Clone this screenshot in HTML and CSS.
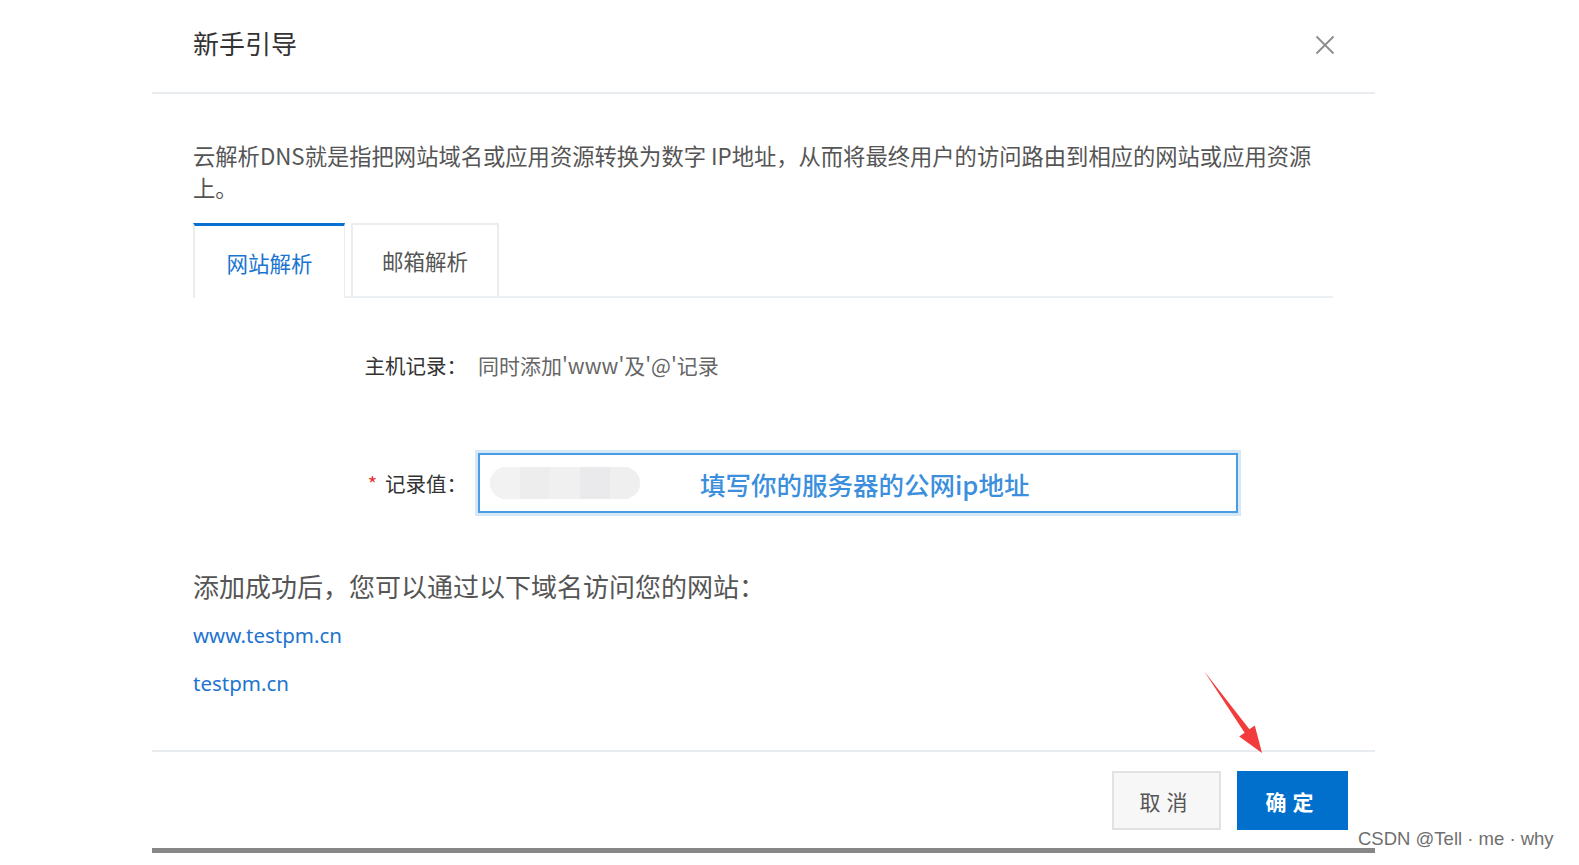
FILE: index.html
```html
<!DOCTYPE html>
<html lang="zh-CN">
<head>
<meta charset="utf-8">
<title>新手引导</title>
<link rel="stylesheet" href="styles.css">
</head>
<body>
<div class="page">
  <div class="dialog">
    <div class="dialog-header">
      <div class="dialog-title">新手引导</div>
      <svg class="close" viewBox="0 0 20 20" width="20" height="20"><path d="M1.5 1.5 L18.5 18.5 M18.5 1.5 L1.5 18.5" stroke="#8c8c8c" stroke-width="1.8" fill="none"/></svg>
    </div>
    <div class="dialog-body">
      <p class="desc">云解析DNS就是指把网站域名或应用资源转换为数字 IP地址，从而将最终用户的访问路由到相应的网站或应用资源上。</p>
      <div class="tabs">
        <div class="tab active">网站解析</div>
        <div class="tab">邮箱解析</div>
      </div>
      <div class="form">
        <div class="form-row">
          <div class="label">主机记录：</div>
          <div class="value">同时添加'www'及'@'记录</div>
        </div>
        <div class="form-row row-input">
          <div class="label"><span class="req">*</span>记录值：</div>
          <div class="input">
            <div class="blur"><span></span><span></span><span></span><span></span><span></span></div>
            <div class="hint">填写你的服务器的公网ip地址</div>
          </div>
        </div>
      </div>
      <div class="success">添加成功后，您可以通过以下域名访问您的网站：</div>
      <a class="link first">www.testpm.cn</a>
      <a class="link">testpm.cn</a>
    </div>
    <div class="dialog-footer">
      <button class="btn btn-cancel">取消</button>
      <button class="btn btn-ok">确定</button>
    </div>
  </div>
  <svg class="arrow" viewBox="0 0 1579 865" width="1579" height="865">
    <polygon points="1204,671 1249.4,729.3 1254.8,725.5 1262,753 1239.2,736.5 1244.6,732.7" fill="#f23b3b"/>
  </svg>
  <div class="watermark">CSDN @Tell · me · why</div>
</div>
</body>
</html>
```

FILE: styles.css
```css
html, body {
  margin: 0;
  padding: 0;
  background: #ffffff;
}
.page {
  position: relative;
  width: 1579px;
  height: 865px;
  overflow: hidden;
  font-family: "Noto Sans CJK SC", "Noto Sans", sans-serif;
}
.dialog {
  margin-left: 152px;
  width: 1223px;
  background: #fff;
  border-bottom: 5px solid #878787;
}
.dialog-header {
  height: 94px;
  box-sizing: border-box;
  border-bottom: 2px solid #e8ecf1;
  display: flex;
  align-items: center;
  justify-content: space-between;
  padding: 0 40px 0 41px;
}
.dialog-title {
  font-size: 26px;
  color: #333;
  margin-top: -8px;
}
.close {
  margin-top: -2px;
}
.dialog-body {
  padding: 0 42px 52px 41px;
}
.desc {
  margin: 45px 0 0;
  width: 1140px;
  font-size: 22.3px;
  line-height: 32px;
  color: #555;
}
.tabs {
  margin-top: 20px;
  display: flex;
  gap: 6px;
  border-bottom: 2px solid #eceff3;
  height: 73px;
}
.tab {
  width: 148px;
  height: 73px;
  box-sizing: border-box;
  border: 2px solid #e9edf2;
  border-bottom: none;
  display: flex;
  align-items: center;
  justify-content: center;
  font-size: 21.5px;
  color: #555;
  padding-top: 0;
}
.tab.active {
  width: 152px;
  height: 75px;
  border-top: 3px solid #0a6fd0;
  background: #fff;
  color: #1a74d2;
  border-right-width: 1px;
  padding-top: 0;
}
.form {
  display: flex;
  flex-direction: column;
}
.form-row {
  display: grid;
  grid-template-columns: 274px 1fr;
  column-gap: 11px;
  align-items: center;
  margin-top: 47px;
  height: 40px;
}
.label {
  text-align: right;
  font-size: 20.5px;
  color: #333;
}
.value {
  font-size: 21px;
  color: #666;
}
.req {
  color: #e5342f;
  margin-right: 8px;
  font-size: 20px;
}
.row-input {
  margin-top: 68px;
  height: 60px;
}
.input {
  width: 760px;
  height: 60px;
  box-sizing: border-box;
  border: 2px solid #4a9de3;
  box-shadow: 0 0 0 3px #d6e8f8;
  display: flex;
  align-items: center;
  padding-left: 10px;
}
.blur {
  width: 150px;
  height: 32px;
  border-radius: 16px;
  overflow: hidden;
  display: flex;
  background: #f1f1f1;
}
.blur span {
  flex: 1;
  background: #f2f2f2;
}
.blur span:nth-child(2) { background: #ededed; }
.blur span:nth-child(3) { background: #f0f0f0; }
.blur span:nth-child(4) { background: #eaeaec; }
.blur span:nth-child(5) { background: #efefef; }
.hint {
  margin-left: 60px;
  font-size: 25.5px;
  font-weight: 500;
  color: #3b8fdd;
}
.success {
  margin-top: 55px;
  font-size: 26px;
  line-height: 36px;
  color: #555;
}
.link {
  display: block;
  font-family: "Noto Sans", "Open Sans", sans-serif;
  font-size: 20.5px;
  line-height: 30px;
  color: #1f74cf;
  margin-top: 18px;
}
.link.first {
  margin-top: 16px;
}
.dialog-footer {
  border-top: 2px solid #e8ecf1;
  display: flex;
  justify-content: flex-end;
  gap: 16px;
  padding: 19px 27px 18px 0;
}
.btn {
  height: 59px;
  box-sizing: border-box;
  font-family: "Noto Sans CJK SC", sans-serif;
  font-size: 21px;
  letter-spacing: 6px;
  padding-left: 6px;
  cursor: pointer;
}
.btn-cancel {
  width: 109px;
  background: #f7f7f7;
  border: 2px solid #e2e2e2;
  color: #555;
}
.btn-ok {
  width: 111px;
  background: #0070cc;
  border: 1px solid #0070cc;
  color: #fff;
  font-weight: 700;
}
.arrow {
  position: absolute;
  top: 0;
  left: 0;
  pointer-events: none;
}
.watermark {
  position: absolute;
  left: 1358px;
  top: 828px;
  font-family: "Liberation Sans", Arial, sans-serif;
  font-size: 18.5px;
  color: #6f6f6f;
  text-shadow: 0 0 2px #fff;
  white-space: nowrap;
}
```
